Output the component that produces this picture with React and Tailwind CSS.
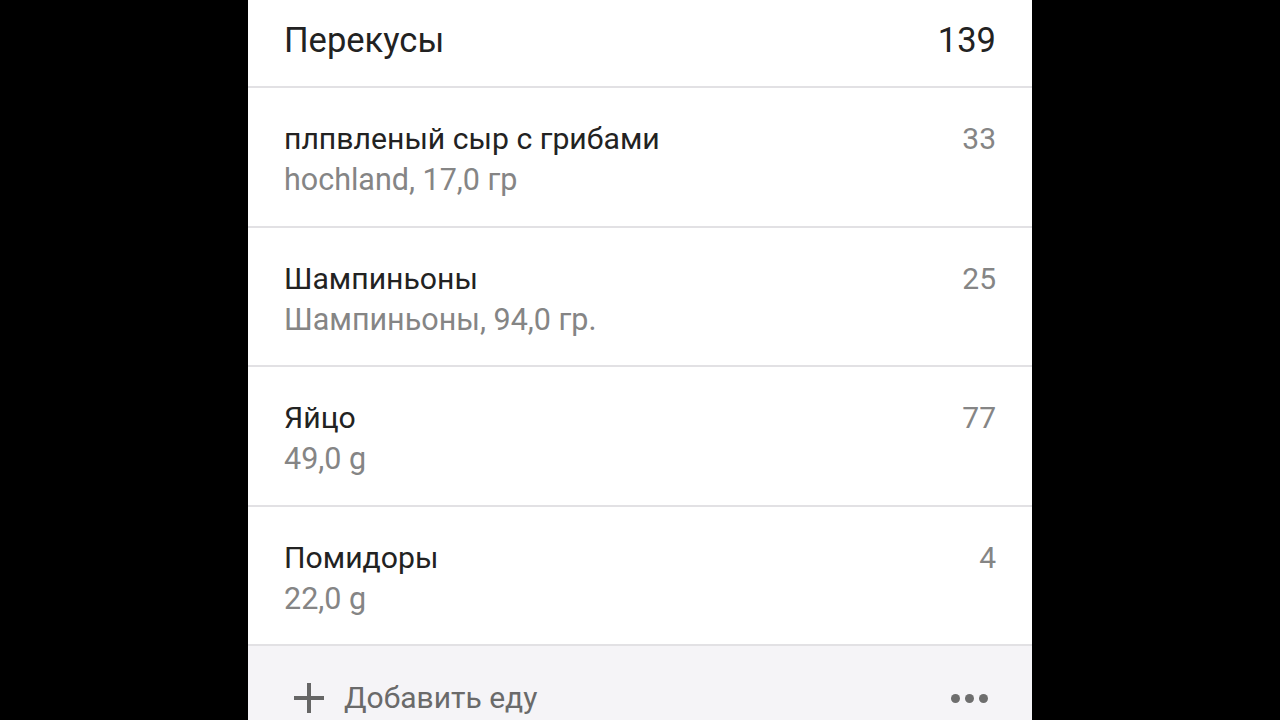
import React from "react";

const items = [
  { name: "плпвленый сыр с грибами", sub: "hochland, 17,0 гр", kcal: "33" },
  { name: "Шампиньоны", sub: "Шампиньоны, 94,0 гр.", kcal: "25" },
  { name: "Яйцо", sub: "49,0 g", kcal: "77" },
  { name: "Помидоры", sub: "22,0 g", kcal: "4" },
];

export default function App() {
  return (
    <div
      className="w-full h-[720px] bg-black flex justify-center overflow-hidden"
      style={{ fontFamily: "Roboto, 'Noto Sans', sans-serif" }}
    >
      <div className="w-[784px] bg-white flex flex-col">
        <div className="h-[88px] shrink-0 flex items-center justify-between px-9 border-b-2 border-[#e2e1e4] pb-[4px]">
          <span className="text-[34.5px] text-[#222222]">Перекусы</span>
          <span className="text-[34.5px] text-[#222222]">139</span>
        </div>
        {items.map((it) => (
          <div
            key={it.name}
            className="h-[139.5px] shrink-0 flex flex-col px-9 pt-[30px] border-b-2 border-[#e2e1e4]"
          >
            <div className="flex justify-between items-baseline leading-[41px]">
              <span className="text-[30.2px] text-[#222222]">{it.name}</span>
              <span className="text-[30px] text-[#858585]">{it.kcal}</span>
            </div>
            <div className="leading-[41px] text-[30.5px] text-[#858585]">{it.sub}</div>
          </div>
        ))}
        <div className="flex-1 bg-[#f5f4f7] flex items-start justify-between pl-[45px] pr-[44px] pt-[32px]">
          <div className="flex items-center gap-[19px]">
            <svg width="32" height="32" viewBox="0 0 32 32">
              <path d="M16 1v30M1 16h30" stroke="#666666" strokeWidth="4" />
            </svg>
            <span className="text-[30px] text-[#6a6a6a] leading-[40px]">Добавить еду</span>
          </div>
          <div className="flex items-center gap-[5px] h-[40px]">
            <span className="w-[9px] h-[9px] rounded-full bg-[#6e6e6e]" />
            <span className="w-[9px] h-[9px] rounded-full bg-[#6e6e6e]" />
            <span className="w-[9px] h-[9px] rounded-full bg-[#6e6e6e]" />
          </div>
        </div>
      </div>
    </div>
  );
}
